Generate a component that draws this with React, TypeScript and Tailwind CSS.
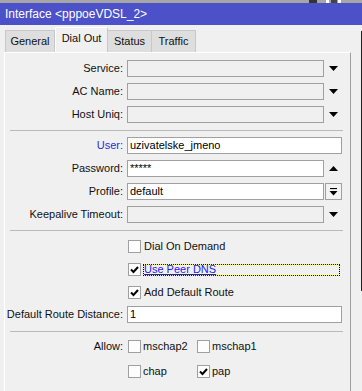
import React from "react";

const Down = () => (
  <svg width="9" height="5" viewBox="0 0 9 5"><path d="M0 0H9L4.5 5Z" fill="#000" /></svg>
);
const Up = () => (
  <svg width="9" height="5" viewBox="0 0 9 5"><path d="M0 5H9L4.5 0Z" fill="#000" /></svg>
);

const Check = ({ checked }: { checked?: boolean }) => (
  <span className="w-[13px] h-[13px] border border-[#a0a0a0] bg-[#fdfdfd] flex items-center justify-center shrink-0">
    {checked && (
      <svg width="9" height="8" viewBox="0 0 9 8">
        <path d="M1 3.5L3.5 6L8 1" stroke="#000" strokeWidth="2" fill="none" />
      </svg>
    )}
  </span>
);

const Label = ({ children, blue }: { children: React.ReactNode; blue?: boolean }) => (
  <div className={`w-[119px] text-right pr-[1px] ${blue ? "text-[#2b2bd9]" : "text-[#111]"}`}>{children}</div>
);

const Field = ({
  label,
  value,
  enabled,
  suffix,
  blue,
  full,
}: {
  label: string;
  value?: string;
  enabled?: boolean;
  suffix?: "down" | "up" | "btn";
  blue?: boolean;
  full?: boolean;
}) => (
  <div className="flex items-center h-[17px]">
    <Label blue={blue}>{label}</Label>
    <div
      className={`ml-[3px] h-[17px] border border-[#a0a0a0] flex items-center pl-[2px] ${
        enabled ? "bg-white" : "bg-[#f0f0f0]"
      } ${full ? "w-[215px]" : "w-[197px]"}`}
    >
      {value}
    </div>
    {suffix === "down" && (
      <div className="w-[18px] flex justify-center"><Down /></div>
    )}
    {suffix === "up" && (
      <div className="w-[18px] flex justify-center"><Up /></div>
    )}
    {suffix === "btn" && (
      <div className="ml-[1px] w-[17px] h-[17px] border border-[#a0a0a0] bg-[#f3f3f3] flex items-center justify-center">
        <svg width="9" height="8" viewBox="0 0 9 8">
          <path d="M1 0.5H8" stroke="#000" strokeWidth="1.2" />
          <path d="M0.5 3H8.5L4.5 7.5Z" fill="#000" />
        </svg>
      </div>
    )}
  </div>
);

const Sep = () => <div className="ml-[5px] w-[333px] h-[1px] bg-[#b9b9b9]" />;

export default function App() {
  return (
    <div
      className="w-[362px] h-[391px] bg-[#f0f0f0] overflow-hidden relative text-[11px] leading-none"
      style={{ fontFamily: '"Liberation Sans", Arial, sans-serif' }}
    >
      <div className="h-[3px] bg-[#a6a6a6] flex">
        <div className="ml-[309px] w-[8px] bg-[#333]" />
        <div className="ml-[9px] w-[3px] bg-white" />
        <div className="ml-[2px] w-[6px] bg-[#444]" />
        <div className="ml-[1px] w-[3px] bg-white" />
      </div>
      <div className="h-[22px] bg-[#4c50c9] text-white text-[12px] flex items-center pl-[5px]">
        Interface &lt;pppoeVDSL_2&gt;
      </div>
      <div className="absolute right-0 top-[31px] w-[1px] h-[260px] bg-[#222]" />
      <div className="h-[27px] flex items-end pl-[5px]">
        <div className="w-[50px] h-[22px] border border-b-0 border-[#c8c8c8] bg-[#dedede] flex items-center justify-center text-[#111]">
          General
        </div>
        <div className="w-[53px] h-[25px] border-t border-l border-white border-r border-r-[#c8c8c8] bg-[#f0f0f0] flex items-center justify-center pb-[4px] text-[#111]">
          Dial Out
        </div>
        <div className="w-[44px] h-[22px] border border-b-0 border-l-0 border-[#c8c8c8] bg-[#dedede] flex items-center justify-center text-[#111]">
          Status
        </div>
        <div className="w-[44px] h-[22px] border border-b-0 border-l-0 border-[#c8c8c8] bg-[#dedede] flex items-center justify-center text-[#111]">
          Traffic
        </div>
      </div>
      <div className="ml-[4px] w-[347px] h-[400px] border-t border-l border-white border-r border-r-[#a0a0a0] flex flex-col pt-[7px]">
        <div className="flex flex-col gap-[6px]">
          <Field label="Service:" suffix="down" />
          <Field label="AC Name:" suffix="down" />
          <Field label="Host Uniq:" suffix="down" />
        </div>
        <div className="mt-[7px]"><Sep /></div>
        <div className="mt-[6px] flex flex-col gap-[6px]">
          <Field label="User:" blue value="uzivatelske_jmeno" enabled full />
          <Field label="Password:" value="*****" enabled suffix="up" />
          <Field label="Profile:" value="default" enabled suffix="btn" />
          <Field label="Keepalive Timeout:" suffix="down" />
        </div>
        <div className="mt-[7px]"><Sep /></div>
        <div className="mt-[7px] flex flex-col gap-[6px]">
          <div className="flex items-center h-[17px] pl-[123px]">
            <Check />
            <span className="ml-[3px] text-[#111]">Dial On Demand</span>
          </div>
          <div className="flex items-center h-[17px] pl-[123px]">
            <Check checked />
            <span className="ml-[2px] w-[197px] h-[12px] border border-dotted border-black bg-[#ffff00] flex">
              <span className="flex-1 bg-[#f0f0f0] text-[#1c1cff] underline flex items-center leading-none">
                Use Peer DNS
              </span>
            </span>
          </div>
          <div className="flex items-center h-[17px] pl-[123px]">
            <Check checked />
            <span className="ml-[3px] text-[#111]">Add Default Route</span>
          </div>
        </div>
        <div className="mt-[5px]">
          <Field label="Default Route Distance:" value="1" enabled full />
        </div>
        <div className="mt-[8px]"><Sep /></div>
        <div className="mt-[6px] flex flex-col gap-[8px]">
          <div className="flex items-center h-[17px]">
            <Label>Allow:</Label>
            <div className="ml-[4px] flex items-center w-[69px]">
              <Check />
              <span className="ml-[2px] text-[#111]">mschap2</span>
            </div>
            <Check />
            <span className="ml-[2px] text-[#111]">mschap1</span>
          </div>
          <div className="flex items-center h-[17px]">
            <div className="w-[120px]" />
            <div className="ml-[3px] flex items-center w-[69px]">
              <Check />
              <span className="ml-[2px] text-[#111]">chap</span>
            </div>
            <Check checked />
            <span className="ml-[2px] text-[#111]">pap</span>
          </div>
        </div>
      </div>
    </div>
  );
}
